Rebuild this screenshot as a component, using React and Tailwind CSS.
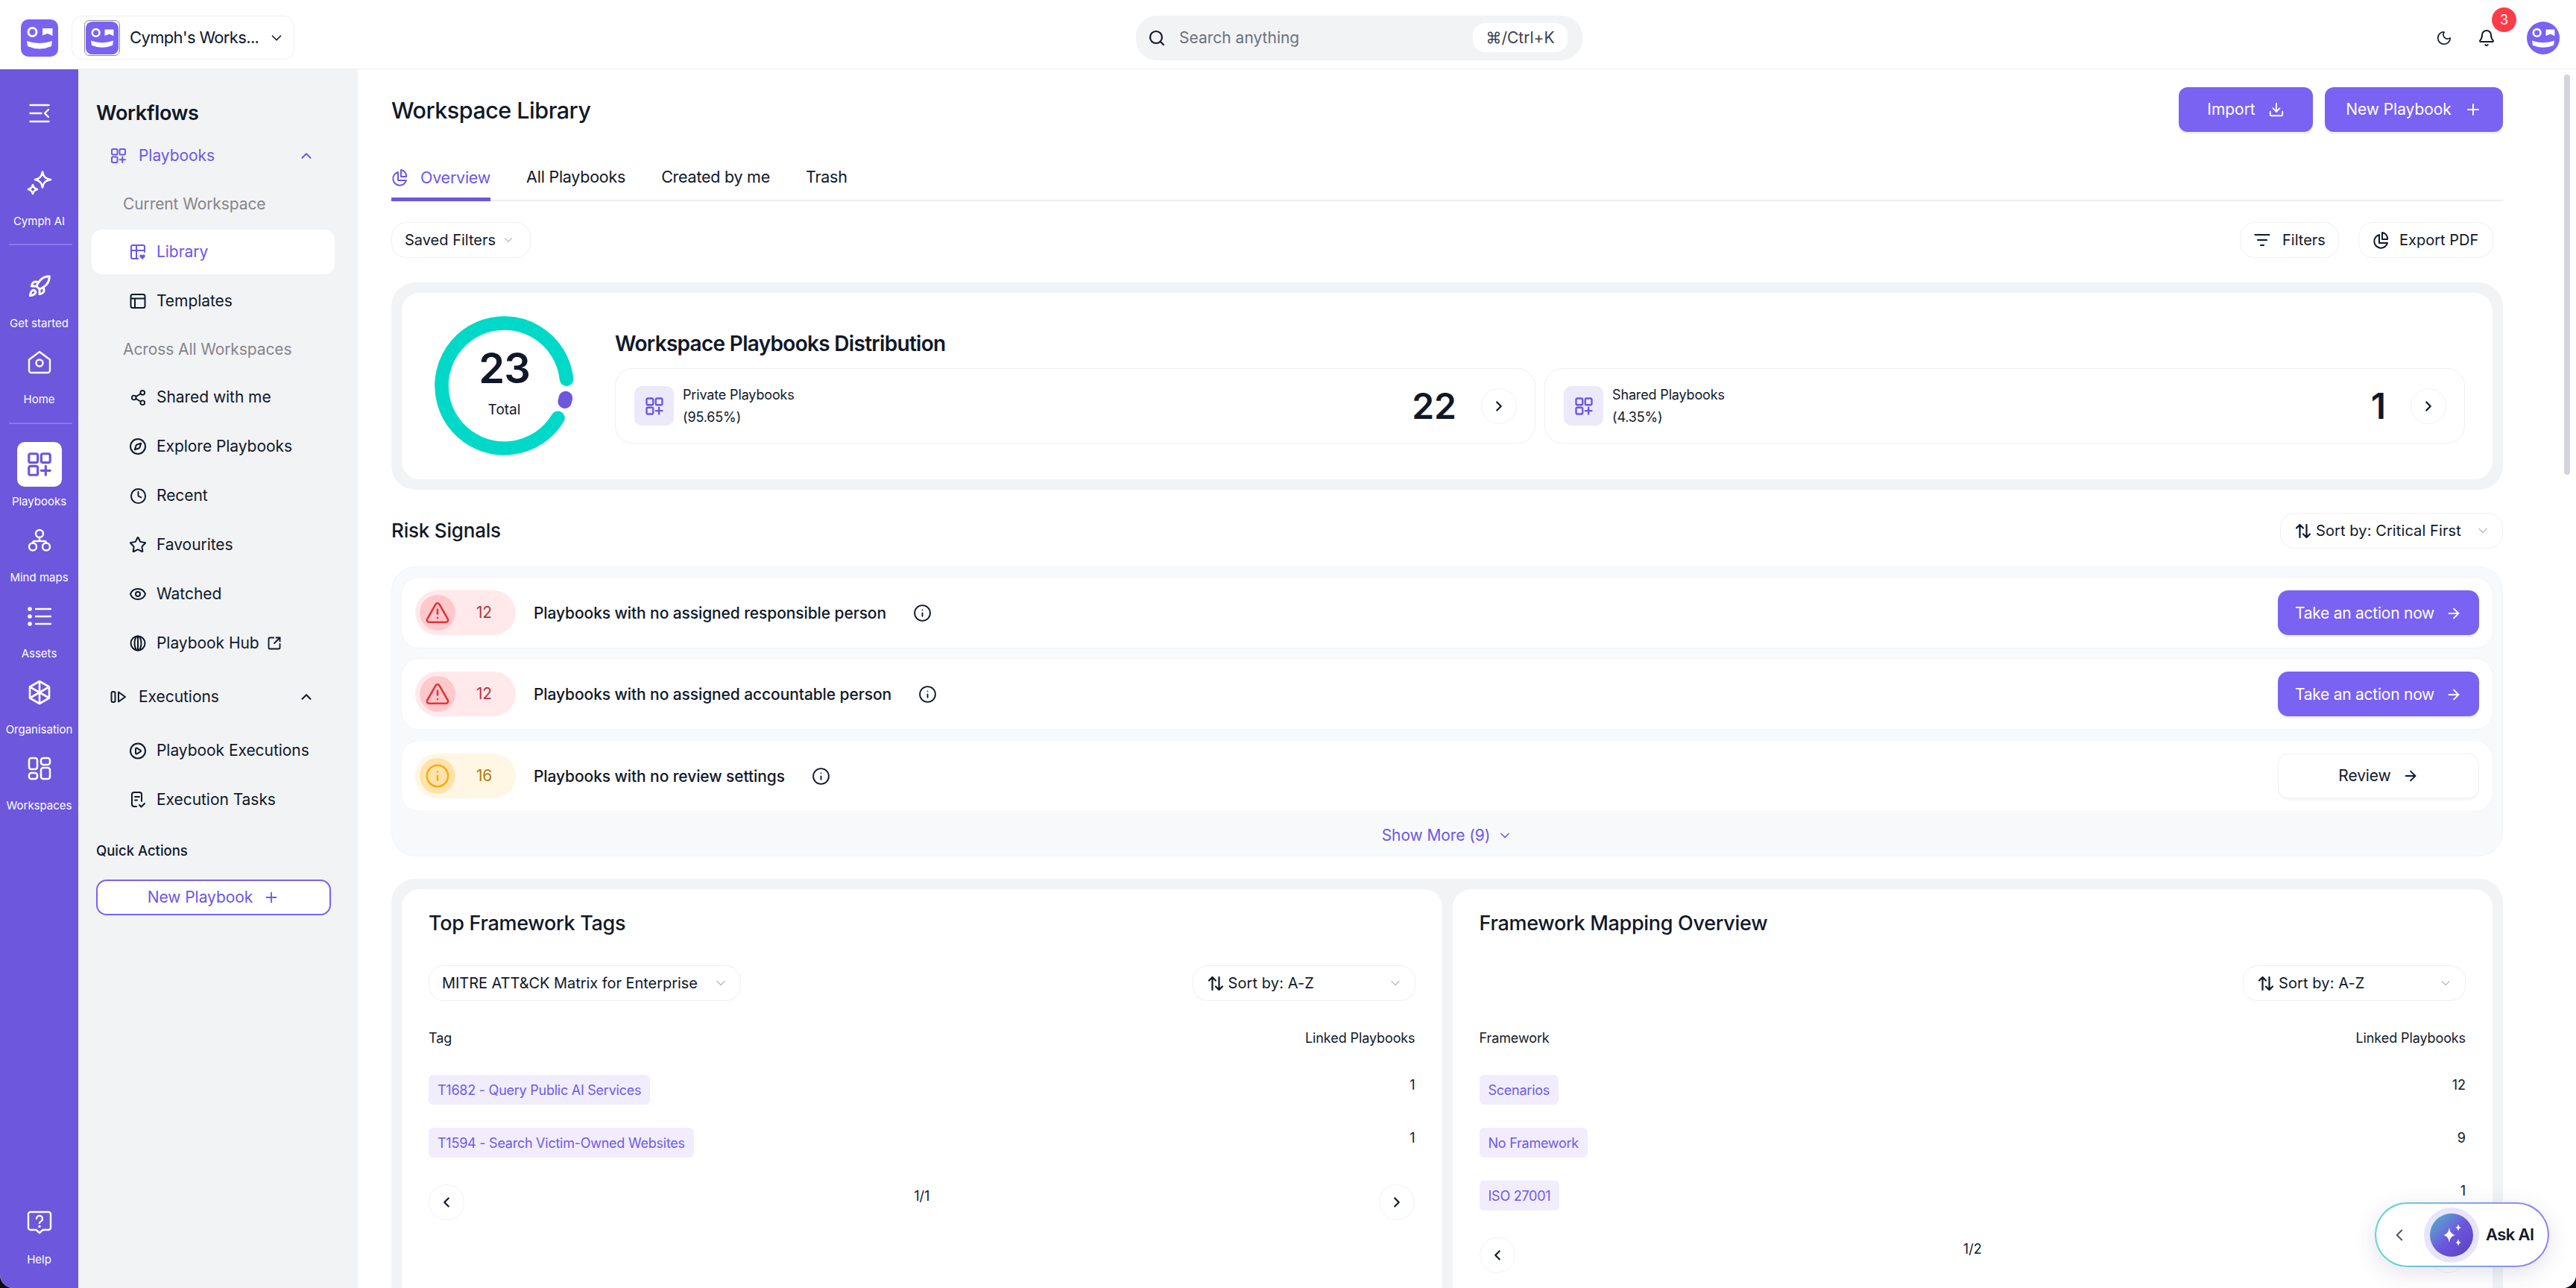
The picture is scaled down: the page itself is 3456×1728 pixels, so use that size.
import React from "react";
import {
  ChevronDown, ChevronUp, ChevronLeft, ChevronRight, Rocket, Share2, Compass, Clock, Star, Eye,
  SquareArrowOutUpRight, CirclePlay, Search, Moon, Bell, Download, Plus, ArrowRight, Info,
  TriangleAlert,
} from "lucide-react";

const Logo = ({ size = 50, className = "" }) => (
  <svg width={size} height={size} viewBox="0 0 50 50" className={className}>
    <rect width="50" height="50" rx="10" fill="#7a62f3" />
    <circle cx="15.5" cy="17" r="5.5" fill="none" stroke="#fff" strokeWidth="3" />
    <path d="M29 12h13.5v10l-6.5-3-7 2.5z" fill="#fff" />
    <path d="M8 29Q25 35 42 29L41 36Q25 43 9 36Z" fill="#fff" />
  </svg>
);

const PlaybookIcon = ({ size = 24, color = "currentColor", sw = 2 }) => (
  <svg width={size} height={size} viewBox="0 0 24 24" fill="none" stroke={color} strokeWidth={sw} strokeLinecap="round" strokeLinejoin="round">
    <rect x="3" y="3" width="7.5" height="7.5" rx="1.5" />
    <rect x="13.5" y="3" width="7.5" height="7.5" rx="1.5" />
    <rect x="3" y="13.5" width="7.5" height="7.5" rx="1.5" />
    <path d="M17.25 13.5v7.5M13.5 17.25H21" />
  </svg>
);

const Stars = () => (
  <svg width="36" height="36" viewBox="0 0 36 36" fill="none" stroke="#fff" strokeWidth="2.6" strokeLinejoin="round">
    <path d="M22 1.500c1.200 6.500 3.500 9 11 10.500-7.500 1.500-9.800 4-11 10.500-1.200-6.500-3.500-9-10-10.500 6.500-1.500 8.800-4 10-10.500z" />
    <path d="M9 19c.8 3.500 2.200 5 6 6-3.800 1-5.200 2.500-6 6-.8-3.500-2.200-5-6-6 3.800-1 5.200-2.500 6-6z" />
  </svg>
);

const Collapse = () => (
  <svg width="28" height="26" viewBox="0 0 28 26" fill="none" stroke="#fff" strokeWidth="2.4" strokeLinecap="round" strokeLinejoin="round">
    <path d="M1.500 2h25M1.500 13h15M1.500 24h25M26 8l-5 5 5 5" />
  </svg>
);

const HomeIc = () => (
  <svg width="32" height="32" viewBox="0 0 32 32" fill="none" stroke="#fff" strokeWidth="2.4" strokeLinejoin="round">
    <path d="M2 12.500 16 2l14 10.500V27a3 3 0 0 1-3 3H5a3 3 0 0 1-3-3z" />
    <circle cx="16" cy="17" r="4.500" />
  </svg>
);

const MindIc = () => (
  <svg width="32" height="32" viewBox="0 0 32 32" fill="none" stroke="#fff" strokeWidth="2.4" strokeLinecap="round">
    <circle cx="16" cy="7" r="5" /><circle cx="7" cy="24.500" r="5" /><circle cx="25" cy="24.500" r="5" />
    <path d="M16 12v5M7 19.500c0-1.500 1-2.500 2.500-2.500h13c1.500 0 2.500 1 2.500 2.500" />
  </svg>
);

const AssetsIc = () => (
  <svg width="32" height="26" viewBox="0 0 32 26" fill="none" stroke="#fff" strokeWidth="2.4" strokeLinecap="round">
    <circle cx="3" cy="3" r="2.800" fill="#fff" stroke="none" /><circle cx="3" cy="13" r="2.800" fill="#fff" stroke="none" /><circle cx="3" cy="23" r="2.800" fill="#fff" stroke="none" />
    <path d="M11 3h20M11 13h20M11 23h20" />
  </svg>
);

const OrgIc = () => (
  <svg width="34" height="34" viewBox="0 0 34 34" fill="none" stroke="#fff" strokeWidth="2.6" strokeLinejoin="round">
    <path d="M17 2 30 9.500v15L17 32 4 24.500v-15z" />
    <path d="M17 2v30M4 9.500l26 15M30 9.500l-26 15" />
  </svg>
);

const WorkspacesIc = () => (
  <svg width="32" height="32" viewBox="0 0 32 32" fill="none" stroke="#fff" strokeWidth="2.6">
    <rect x="2" y="2" width="11" height="15" rx="3" /><rect x="18" y="2" width="12" height="9" rx="3" />
    <rect x="2" y="22" width="11" height="8" rx="3" /><rect x="18" y="15" width="12" height="15" rx="3" />
  </svg>
);

const HelpIc = () => (
  <svg width="34" height="32" viewBox="0 0 34 32" fill="none" stroke="#fff" strokeWidth="2.400" strokeLinejoin="round" strokeLinecap="round">
    <path d="M5 2h24a3 3 0 0 1 3 3v18a3 3 0 0 1-3 3h-7.500L17 30l-4.500-4H5a3 3 0 0 1-3-3V5a3 3 0 0 1 3-3z" />
    <path d="M13 11a4 4 0 1 1 6 3.500c-1.300.8-2 1.400-2 2.500" /><circle cx="17" cy="21.500" r=".6" fill="#fff" />
  </svg>
);

const LibraryIc = () => (
  <svg width="24" height="24" viewBox="0 0 24 24" fill="none" stroke="#6c57e8" strokeWidth="2" strokeLinejoin="round" strokeLinecap="round">
    <path d="M12 21H5a2 2 0 0 1-2-2V5a2 2 0 0 1 2-2h14a2 2 0 0 1 2 2v7" />
    <path d="M3 10h18M10 3v18" />
    <path d="M18 22l-3.500-3.500a2 2 0 0 1 3.500-2 2 2 0 0 1 3.500 2z" fill="#6c57e8" stroke="none" />
  </svg>
);

const TemplatesIc = () => (
  <svg width="24" height="24" viewBox="0 0 24 24" fill="none" stroke="#101828" strokeWidth="2" strokeLinejoin="round">
    <rect x="2.500" y="3" width="19" height="18" rx="2.500" /><path d="M2.500 8.500h19M8 8.500V21" />
  </svg>
);

const HubIc = () => (
  <svg width="24" height="24" viewBox="0 0 24 24" fill="none" stroke="#101828" strokeWidth="2">
    <circle cx="12" cy="12" r="9.500" /><ellipse cx="12" cy="12" rx="4.500" ry="9.500" /><path d="M12 2.500v19" />
  </svg>
);

const ExecIc = () => (
  <svg width="22" height="22" viewBox="0 0 22 22" fill="none" stroke="#101828" strokeWidth="2" strokeLinejoin="round">
    <rect x="1.500" y="4" width="5" height="14" rx="2" /><path d="M11 4.500 20 11l-9 6.500z" />
  </svg>
);

const TasksIc = () => (
  <svg width="22" height="24" viewBox="0 0 22 24" fill="none" stroke="#101828" strokeWidth="2" strokeLinecap="round" strokeLinejoin="round">
    <path d="M9 21H6a3 3 0 0 1-3-3V5a3 3 0 0 1 3-3h7a3 3 0 0 1 3 3v9" />
    <path d="M7 8h6M7 12.500h3M13 19l2.500 2.500L20 17" />
  </svg>
);

const RailItem = ({ icon, label, active }) => (
  <div className="flex h-[90px] flex-col items-center">
    <div className={`flex h-[60px] w-[60px] items-center justify-center rounded-[10px] ${active ? "bg-white" : ""}`}>{icon}</div>
    <div className="mt-[10px] h-[20px] whitespace-nowrap text-[15px] leading-[20px] text-white">{label}</div>
  </div>
);

const Divider = () => <div className="mx-[12px] h-[2px] w-[85px] bg-[#8a78ec]" />;

const Rail = () => (
  <aside className="flex w-[105px] shrink-0 flex-col bg-[#6c57dd]">
    <div className="flex h-[118px] items-center justify-center"><Collapse /></div>
    <div className="mt-[6px]"><RailItem icon={<Stars />} label="Cymph AI" /></div>
    <div className="mt-[20px]"><Divider /></div>
    <div className="mt-[25px] flex flex-col gap-[12px]">
      <RailItem icon={<Rocket size={32} color="#fff" strokeWidth={2.2} />} label="Get started" />
      <RailItem icon={<HomeIc />} label="Home" />
    </div>
    <div className="mt-[21px]"><Divider /></div>
    <div className="mt-[24px] flex flex-col gap-[12px]">
      <RailItem active icon={<PlaybookIcon size={38} color="#6c57dd" sw={2} />} label="Playbooks" />
      <RailItem icon={<MindIc />} label="Mind maps" />
      <RailItem icon={<AssetsIc />} label="Assets" />
      <RailItem icon={<OrgIc />} label="Organisation" />
      <RailItem icon={<WorkspacesIc />} label="Workspaces" />
    </div>
    <div className="mt-auto pb-[28px]"><RailItem icon={<HelpIc />} label="Help" /></div>
  </aside>
);

const NavRow = ({ icon, children, active, extra }) => (
  <div className={`ml-[18px] flex h-[60px] w-[326px] items-center rounded-[14px] pl-[50px] ${active ? "bg-white text-[#6c57e8]" : "text-[#101828]"}`}>
    <span className="flex w-[24px] justify-center">{icon}</span>
    <span className="ml-[13px] whitespace-nowrap text-[21px] tracking-[-0.05px]">{children}</span>
    {extra}
  </div>
);

const GroupRow = ({ icon, children, purple, className = "" }) => (
  <div className={`flex h-[60px] items-center pl-[147px] pr-[58px] ${purple ? "text-[#6c57e8]" : "text-[#101828]"} ${className}`}>
    <span className="flex w-[24px] justify-center">{icon}</span>
    <span className="ml-[15px] flex-1 text-[21px] tracking-[-0.05px]">{children}</span>
    <ChevronUp size={22} strokeWidth={2.2} />
  </div>
);

const SubHead = ({ children }) => (
  <div className="flex h-[57px] items-center pl-[165px] text-[21px] tracking-[-0.1px] text-[#85858a]">{children}</div>
);

const Sidebar = () => (
  <aside className="flex w-[375px] shrink-0 flex-col bg-[#f2f3f5]">
    <div className="h-[86px] pl-[24px] pt-[44px] text-[27px] font-semibold leading-[30px] tracking-[-0.3px] text-[#101828]">Workflows</div>
    <div className="-ml-[105px] flex flex-col gap-[6px]">
      <GroupRow purple icon={<PlaybookIcon size={24} color="#6c57e8" />}>Playbooks</GroupRow>
      <SubHead>Current Workspace</SubHead>
      <div className="pl-[105px]"><NavRow active icon={<LibraryIc />}>Library</NavRow></div>
      <div className="pl-[105px]"><NavRow icon={<TemplatesIc />}>Templates</NavRow></div>
      <SubHead>Across All Workspaces</SubHead>
      {[
        [<Share2 size={23} strokeWidth={2} />, "Shared with me"],
        [<Compass size={24} strokeWidth={2} />, "Explore Playbooks"],
        [<Clock size={23} strokeWidth={2} />, "Recent"],
        [<Star size={24} strokeWidth={2} />, "Favourites"],
        [<Eye size={24} strokeWidth={2} />, "Watched"],
      ].map(([ic, t]) => (
        <div key={t} className="pl-[105px]"><NavRow icon={ic}>{t}</NavRow></div>
      ))}
      <div className="pl-[105px]">
        <NavRow icon={<HubIc />} extra={<SquareArrowOutUpRight size={20} strokeWidth={2.2} className="ml-[10px]" />}>Playbook Hub</NavRow>
      </div>
      <GroupRow icon={<ExecIc />} className="mt-[6px]">Executions</GroupRow>
      <div className="mt-[6px] pl-[105px]"><NavRow icon={<CirclePlay size={25} strokeWidth={2} />}>Playbook Executions</NavRow></div>
      <div className="pl-[105px]"><NavRow icon={<TasksIc />}>Execution Tasks</NavRow></div>
    </div>
    <div className="pl-[24px] pt-[26px] text-[18.5px] font-medium leading-[24px] text-[#101828]">Quick Actions</div>
    <button className="ml-[24px] mt-[27px] flex h-[48px] w-[315px] items-center justify-center gap-[14px] rounded-[14px] border-2 border-[#7a62f3] bg-white text-[21px] tracking-[-0.05px] text-[#6c57e8]">
      New Playbook <Plus size={22} strokeWidth={2} />
    </button>
  </aside>
);

const Header = () => (
  <header className="flex h-[93px] shrink-0 items-center border-b border-[#eeeff1] bg-white pl-[28px] pr-[22px] pt-[9px]">
    <Logo />
    <div className="ml-[18px] flex h-[59px] w-[299px] items-center rounded-[14px] border border-[#f0f0f2] pl-[16px]">
      <div className="rounded-[7px] border border-[#8b8b94] bg-white p-[1px]"><Logo size={44} /></div>
      <span className="ml-[13px] whitespace-nowrap text-[22px] tracking-[-0.65px] text-[#101828]">Cymph's Works...</span>
      <ChevronDown size={22} className="ml-[13px] text-[#101828]" strokeWidth={1.8} />
    </div>
    <div className="ml-[1129px] flex h-[60px] w-[599px] items-center rounded-[28px] bg-[#f2f3f5] pl-[16px] pr-[20px]">
      <Search size={24} strokeWidth={2.2} className="text-[#101828]" />
      <span className="ml-[18px] flex-1 text-[21px] text-[#6a7280]">Search anything</span>
      <span className="flex h-[39px] w-[127px] items-center justify-center rounded-[16px] bg-white text-[21px] text-[#374151]">⌘/Ctrl+K</span>
    </div>
    <div className="ml-auto flex items-center">
      <Moon size={22} strokeWidth={1.8} className="text-[#101828]" />
      <Bell size={24} strokeWidth={2} className="relative ml-[34px] text-[#101828]" />
      <div className="ml-[42px] h-[44px] w-[44px] overflow-hidden rounded-full"><Logo size={44} /></div>
    </div>
  </header>
);

const PrimaryBtn = ({ children, w, icon }) => (
  <button className={`flex h-[60px] items-center justify-center gap-[17px] rounded-[12px] bg-[#7a62f3] text-[21px] tracking-[-0.05px] text-white shadow-[0_3px_0_#f3effe] ${w}`}>
    {children}{icon}
  </button>
);

const Pill = ({ children, className = "" }) => (
  <div className={`flex h-[48px] items-center rounded-[20px] border border-[#f0f0f4] bg-white text-[20px] text-[#101828] ${className}`}>{children}</div>
);

const Tabs = () => (
  <div className="mt-[32px] flex h-[61px] items-end gap-[48px] border-b-2 border-[#eeeff1] text-[21.5px] tracking-[-0.25px] text-[#101828]">
    <div className="-mb-[2px] flex h-[61px] items-center gap-[17px] border-b-[5px] border-[#6c57dd] pt-[2px] text-[#6c57e8]">
      <svg width="22" height="24" viewBox="0 0 22 24" fill="none" stroke="#6c57e8" strokeWidth="2" strokeLinejoin="round">
        <path d="M9 5a9 9 0 1 0 11 11H9z" /><path d="M13 2a8 8 0 0 1 7 9h-7z" />
      </svg>
      Overview
    </div>
    {["All Playbooks", "Created by me", "Trash"].map((t) => (
      <div key={t} className="flex h-[61px] items-center">{t}</div>
    ))}
  </div>
);

const Ring = () => (
  <div className="relative h-[187px] w-[187px] shrink-0">
    <svg width="187" height="187" viewBox="0 0 187 187" fill="none" strokeWidth="18.500" strokeLinecap="round">
      <path d="M177.04 84.72A84 84 0 1 0 165.500 136.760" stroke="#00d9c8" />
      <path d="M175.87 109.960A84 84 0 0 1 174.750 114.810" stroke="#6c57dd" />
    </svg>
    <div className="absolute inset-0 flex flex-col items-center pt-[40px] text-[#101828]">
      <span className="text-[56px] font-semibold leading-[60px] tracking-[-1px]">23</span>
      <span className="mt-[14px] text-[19px] leading-[24px]">Total</span>
    </div>
  </div>
);

const CircleBtn = ({ dir, className = "" }) => (
  <div className={`flex h-[48px] w-[48px] items-center justify-center rounded-full border border-[#f3f3f6] bg-white text-[#101828] ${className}`}>
    {dir === "l" ? <ChevronLeft size={22} strokeWidth={2.4} /> : <ChevronRight size={22} strokeWidth={2.4} />}
  </div>
);

const Stat = ({ label, pct, value }) => (
  <div className="flex h-[101px] flex-1 items-center rounded-[24px] border border-[#f0f0f3] bg-white pl-[25px] pr-[24px]">
    <div className="flex h-[53px] w-[53px] items-center justify-center rounded-[10px] bg-[#ece9fb]"><PlaybookIcon size={28} color="#6c57dd" /></div>
    <div className="ml-[12px] flex-1 pt-[1px] text-[18px] leading-[30px] tracking-[-0.15px] text-[#101828]">
      <div>{label}</div><div>{pct}</div>
    </div>
    <span className="text-[48px] font-semibold leading-none text-[#101828]">{value}</span>
    <CircleBtn dir="r" className="ml-[33px]" />
  </div>
);

const Overview = () => (
  <section className="mt-[33px] rounded-[32px] bg-[#f2f3f5] p-[14px]">
    <div className="flex h-[250px] rounded-[24px] bg-white pl-[44px] pr-[37px] pt-[31px]">
      <Ring />
      <div className="ml-[55px] min-w-0 flex-1 pt-[20px]">
        <h2 className="h-[34px] text-[28px] font-semibold leading-[34px] tracking-[-0.7px] text-[#101828]">Workspace Playbooks Distribution</h2>
        <div className="mt-[16px] flex gap-[12px]">
          <Stat label="Private Playbooks" pct="(95.65%)" value="22" />
          <Stat label="Shared Playbooks" pct="(4.35%)" value="1" />
        </div>
      </div>
    </div>
  </section>
);

const SortIc = () => (
  <svg width="22" height="22" viewBox="0 0 22 22" fill="none" stroke="#101828" strokeWidth="2.200" strokeLinecap="round" strokeLinejoin="round">
    <path d="M6.500 20V3M2 7.500 6.500 3 11 7.500M15.500 3v17M11 15.500l4.500 4.500 4.500-4.500" />
  </svg>
);

const SortPill = ({ label, className = "" }) => (
  <Pill className={`pl-[19px] pr-[16px] ${className}`}>
    <SortIc />
    <span className="ml-[6px] flex-1 whitespace-nowrap tracking-[0.1px]">{label}</span>
    <ChevronDown size={20} strokeWidth={1.5} className="text-[#b9b9c0]" />
  </Pill>
);

const RiskRow = ({ kind, n, text, action, className = "" }) => {
  const red = kind === "red";
  return (
    <div className={`flex h-[96px] items-center rounded-[24px] border border-[#f3f4f6] bg-white pl-[18px] pr-[18px] ${className}`}>
      <div className={`flex h-[60px] w-[135px] items-center rounded-[30px] pl-[6px] ${red ? "bg-[#ffe9ea]" : "bg-[#fff6e3]"}`}>
        <div className={`flex h-[48px] w-[48px] items-center justify-center rounded-full ${red ? "bg-[#ffc9cc]" : "bg-[#ffe3ad]"}`}>
          {red ? <TriangleAlert size={34} strokeWidth={1.8} className="text-[#e2333f]" /> : <Info size={34} strokeWidth={1.8} className="text-[#f5ae0b]" />}
        </div>
        <span className={`ml-[28px] text-[21px] tracking-[-0.4px] ${red ? "text-[#c0313a]" : "text-[#b47c03]"}`}>{n}</span>
      </div>
      <span className="ml-[24px] whitespace-nowrap pt-[2px] text-[21px] font-medium tracking-[-0.1px] text-[#101828]">{text}</span>
      <Info size={25} strokeWidth={1.8} className="ml-[36px] text-[#101828]" />
      {action === "take" ? (
        <button className="ml-auto flex h-[60px] w-[270px] items-center justify-center gap-[15px] rounded-[14px] bg-[#7a62f3] pt-[1px] text-[21px] tracking-[-0.25px] text-white shadow-[0_3px_0_#f5f0fe]">
          Take an action now <ArrowRight size={22} strokeWidth={2} />
        </button>
      ) : (
        <button className="ml-auto flex h-[60px] w-[270px] items-center justify-center gap-[15px] rounded-[14px] border border-[#f1f1f4] bg-white text-[21px] tracking-[-0.1px] text-[#101828] shadow-[0_3px_0_#f8f8fa]">
          Review <ArrowRight size={22} strokeWidth={2} />
        </button>
      )}
    </div>
  );
};

const Risk = () => (
  <>
    <div className="mt-[31px] flex h-[47px] items-center justify-between">
      <h2 className="text-[26px] font-medium tracking-[-0.2px] text-[#101828]">Risk Signals</h2>
      <SortPill label="Sort by: Critical First" className="h-[47px] w-[299px] border-[#efedfb]" />
    </div>
    <section className="mt-[25px] h-[389px] rounded-[32px] border border-[#f3f4f6] bg-[#f8f9fa] px-[12px] pt-[13px]">
      <div className="flex flex-col gap-[13px]">
        <RiskRow kind="red" n="12" text="Playbooks with no assigned responsible person" action="take" />
        <RiskRow kind="red" n="12" text="Playbooks with no assigned accountable person" action="take" />
        <RiskRow kind="amber" n="16" text="Playbooks with no review settings" className="mt-[1px]" />
      </div>
      <div className="mt-[16px] flex items-center justify-center gap-[10px] text-[21px] tracking-[-0.1px] text-[#6c57e8]">
        Show More (9) <ChevronDown size={20} strokeWidth={2} />
      </div>
    </section>
  </>
);

const Tag = ({ children }) => (
  <span className="inline-flex h-[40px] items-center rounded-[6px] bg-[#f1edfd] px-[12px] text-[18px] tracking-[-0.25px] text-[#6f5ae6]">{children}</span>
);

const TableRow = ({ tag, n }) => (
  <div className="flex h-[40px] justify-between">
    <Tag>{tag}</Tag>
    <span className="pt-[2px] text-[18px] leading-[24px] text-[#101828]">{n}</span>
  </div>
);

const Card = ({ title, select, head, rows, page }) => (
  <div className="h-[535px] flex-1 rounded-t-[24px] bg-white px-[36px] pt-[31px]">
    <h2 className="h-[30px] text-[27px] font-medium leading-[30px] tracking-[-0.3px] text-[#101828]">{title}</h2>
    <div className="mt-[41px] flex h-[47px] items-center justify-between">
      {select ? (
        <Pill className="h-[47px] w-[419px] border-[#efedfb] pl-[17px] pr-[16px]">
          <span className="flex-1 whitespace-nowrap tracking-[-0.05px]">{select}</span>
          <ChevronDown size={20} strokeWidth={1.5} className="text-[#b9b9c0]" />
        </Pill>
      ) : <span />}
      <SortPill label="Sort by: A-Z" className="h-[47px] w-[299px] border-[#efedfb]" />
    </div>
    <div className="mt-[38px] flex h-[24px] items-center justify-between text-[18px] tracking-[-0.1px] text-[#101828]">
      <span>{head}</span><span>Linked Playbooks</span>
    </div>
    <div className="mt-[38px] flex flex-col gap-[31px]">
      {rows.map(([t, n]) => <TableRow key={t} tag={t} n={n} />)}
    </div>
    <div className="mt-[36px] flex items-start justify-between">
      <CircleBtn dir="l" />
      <span className="pt-[4px] text-[18px] leading-[24px] text-[#101828]">{page}</span>
      <CircleBtn dir="r" />
    </div>
  </div>
);

const Bottom = () => (
  <section className="mt-[30px] flex gap-[14px] rounded-t-[32px] bg-[#f2f3f5] px-[14px] pt-[14px]">
    <Card title="Top Framework Tags" select="MITRE ATT&CK Matrix for Enterprise" head="Tag"
      rows={[["T1682 - Query Public AI Services", "1"], ["T1594 - Search Victim-Owned Websites", "1"]]} page="1/1" />
    <Card title="Framework Mapping Overview" head="Framework"
      rows={[["Scenarios", "12"], ["No Framework", "9"], ["ISO 27001", "1"]]} page="1/2" />
  </section>
);

const AskAI = () => (
  <div className="absolute left-[3186px] top-[1613px] rounded-[44px] bg-gradient-to-r from-[#5ed9cf] to-[#8f7cf7] p-[2px] shadow-[0_8px_30px_rgba(60,50,120,0.14)]">
    <div className="flex h-[83px] w-[230px] items-center rounded-[42px] bg-white pl-[18px]">
      <ChevronLeft size={26} strokeWidth={1.8} className="text-[#4b5563]" />
      <div className="ml-[20px] flex h-[74px] w-[74px] shrink-0 items-center justify-center rounded-full bg-[#e8e4fb]">
        <div className="flex h-[58px] w-[58px] items-center justify-center rounded-full bg-gradient-to-br from-[#3fb7c2] via-[#6c57dd] to-[#5a3fbf]">
          <svg width="36" height="36" viewBox="0 0 36 36" fill="#fff">
            <path d="M15 8c1 6 3 8.500 8 10-5 1.500-7 4-8 10-1-6-3-8.500-8-10 5-1.500 7-4 8-10z" />
            <path d="M27 3c.5 3 1.500 4.500 4 5-2.500.5-3.500 2-4 5-.5-3-1.500-4.500-4-5 2.500-.5 3.500-2 4-5z" />
            <path d="M27 23c.5 3 1.500 4.500 4 5-2.500.5-3.500 2-4 5-.5-3-1.500-4.500-4-5 2.500-.5 3.500-2 4-5z" />
          </svg>
        </div>
      </div>
      <span className="ml-[9px] whitespace-nowrap text-[22px] font-semibold tracking-[-0.6px] text-[#101828]">Ask AI</span>
    </div>
  </div>
);

export default function App() {
  return (
    <div className="relative h-[1728px] w-[3456px] overflow-hidden bg-[#0b0b10] [font-family:Inter,sans-serif]">
      <div className="flex h-full w-full flex-col overflow-hidden rounded-b-[18px] bg-white">
        <Header />
        <div className="flex min-h-0 flex-1">
          <Rail />
          <Sidebar />
          <main className="min-w-0 flex-1 overflow-hidden bg-white pl-[45px] pr-[98px]">
            <div className="mt-[24px] flex h-[60px] items-center justify-between">
              <h1 className="pt-[2px] text-[30.5px] font-medium tracking-[-0.5px] text-[#101828]">Workspace Library</h1>
              <div className="flex gap-[16px]">
                <PrimaryBtn w="w-[180px]" icon={<Download size={22} strokeWidth={2} />}>Import</PrimaryBtn>
                <PrimaryBtn w="w-[239px]" icon={<Plus size={24} strokeWidth={2} />}>New Playbook</PrimaryBtn>
              </div>
            </div>
            <Tabs />
            <div className="mt-[28px] flex items-center justify-between pr-[13px]">
              <Pill className="w-[187px] gap-[8px] pl-[17px]">Saved Filters <ChevronDown size={18} strokeWidth={1.5} className="text-[#b9b9c0]" /></Pill>
              <div className="flex gap-[26px]">
                <Pill className="w-[133px] gap-[16px] pl-[18px]">
                  <svg width="22" height="18" viewBox="0 0 22 18" fill="none" stroke="#101828" strokeWidth="2.200" strokeLinecap="round"><path d="M1.500 2h19M5 9h12M9 16h4" /></svg>
                  Filters
                </Pill>
                <Pill className="w-[181px] gap-[14px] pl-[18px]">
                  <svg width="22" height="24" viewBox="0 0 22 24" fill="none" stroke="#101828" strokeWidth="2" strokeLinejoin="round">
                    <path d="M9 5a9 9 0 1 0 11 11H9z" /><path d="M13 2a8 8 0 0 1 7 9h-7z" />
                  </svg>
                  Export PDF
                </Pill>
              </div>
            </div>
            <Overview />
            <Risk />
            <Bottom />
          </main>
        </div>
      </div>
      <div className="absolute left-[3343px] top-[10px] flex h-[33px] w-[33px] items-center justify-center rounded-full bg-[#ff3b47] text-[18px] text-white">3</div>
      <div className="absolute left-[3440px] top-[100px] h-[537px] w-[8px] rounded-full bg-[#d3d5db]" />
      <AskAI />
    </div>
  );
}
